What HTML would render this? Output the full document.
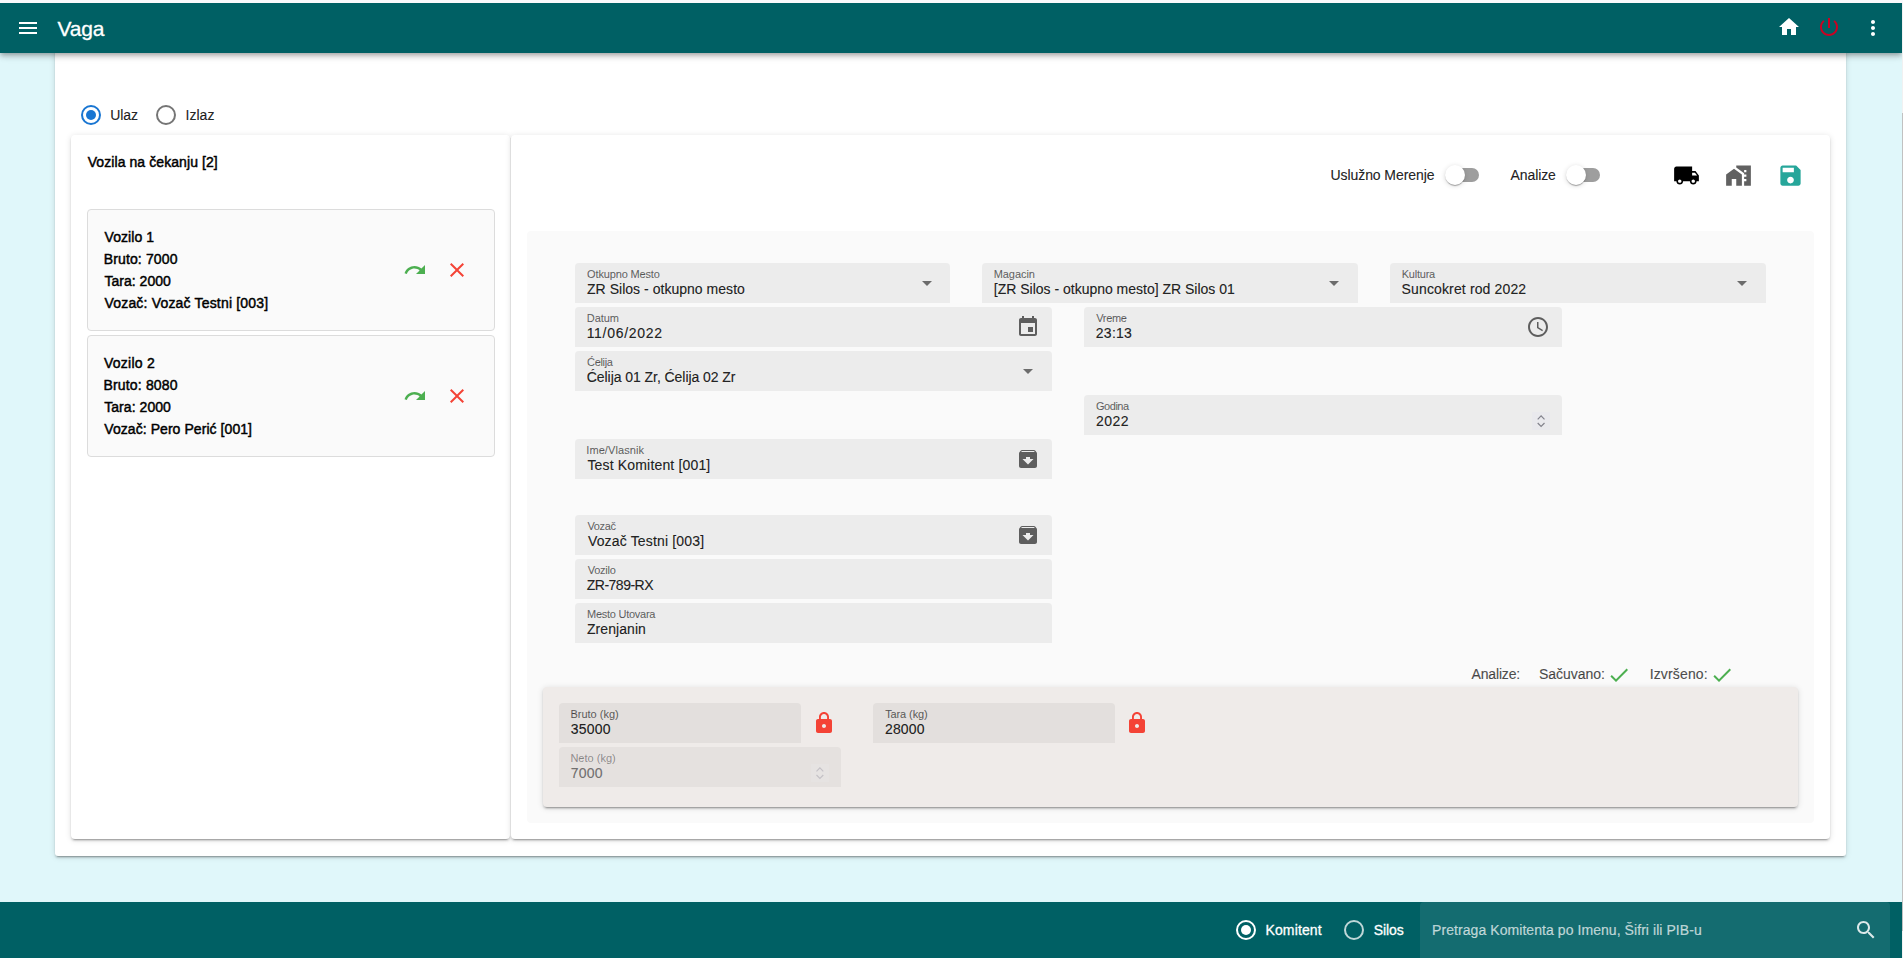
<!DOCTYPE html>
<html lang="sr">
<head>
<meta charset="utf-8">
<title>Vaga</title>
<style>
*{box-sizing:border-box;margin:0;padding:0}
html,body{width:1903px;height:958px;overflow:hidden}
body{position:relative;background:#e0f7fa;font-family:"Liberation Sans",sans-serif;font-size:14px;color:rgba(0,0,0,.87)}
.abs{position:absolute}
.t{position:absolute;white-space:nowrap;line-height:1;z-index:7}
#topstrip{left:0;top:0;width:1903px;height:3px;background:#f9f9fb;z-index:8}
#header{left:0;top:3px;width:1902px;height:50px;background:#006064;box-shadow:0 2px 4px -1px rgba(0,0,0,.2),0 4px 5px 0 rgba(0,0,0,.14),0 1px 10px 0 rgba(0,0,0,.12);z-index:5}
#sb{left:1902px;top:3px;width:1px;height:955px;background:#f1f1f1;z-index:9}
#sbthumb{left:1902px;top:113px;width:1px;height:818px;background:#c1c1c1;z-index:10}
#outer{left:55px;top:40px;width:1791px;height:816px;background:#fff;border-radius:3px;box-shadow:0 3px 1px -2px rgba(0,0,0,.2),0 2px 2px 0 rgba(0,0,0,.14),0 1px 6px 0 rgba(0,0,0,.13)}
.card{background:#fff;border-radius:4px;box-shadow:0 3px 1px -2px rgba(0,0,0,.2),0 2px 2px 0 rgba(0,0,0,.14),0 1px 6px 0 rgba(0,0,0,.13)}
#left{left:71px;top:135px;width:439px;height:704px}
#right{left:511px;top:135px;width:1319px;height:704px}
.vcard{left:87px;width:408px;height:122px;background:#fafafa;border:1px solid #dcdcdc;border-radius:4px}
.b{font-weight:bold;font-size:14px;color:#000}
#panel{left:527px;top:231px;width:1287px;height:592px;background:#fafafa;border-radius:4px}
.f{position:absolute;height:40px;background:#ececec;border-radius:4px 4px 0 0}
.f .l{position:absolute;left:12px;top:6px;font-size:11px;line-height:1;color:rgba(0,0,0,.6);white-space:nowrap}
.f .v{position:absolute;left:12px;top:19px;font-size:14px;line-height:1;color:rgba(0,0,0,.87);white-space:nowrap}
#wpanel{left:543px;top:687px;width:1255px;height:120px;background:#efebe9;border-radius:4px;box-shadow:0 3px 1px -2px rgba(0,0,0,.2),0 2px 2px 0 rgba(0,0,0,.14),0 1px 6px 0 rgba(0,0,0,.13)}
.w{background:#e3dfdd}
#footer{left:0;top:902px;width:1902px;height:56px;background:#006064}
#search{left:1420px;top:902px;width:470px;height:56px;background:#146c70;border-radius:4px 4px 0 0}
svg{position:absolute;display:block}
.arr{position:absolute;width:0;height:0;border-left:5px solid transparent;border-right:5px solid transparent;border-top:5px solid rgba(0,0,0,.54)}
.thumb{width:20px;height:20px;border-radius:50%;background:#fff;box-shadow:0 2px 1px -1px rgba(0,0,0,.2),0 1px 1px 0 rgba(0,0,0,.14),0 1px 5px 0 rgba(0,0,0,.16)}
</style>
</head>
<body>
<div id="topstrip" class="abs"></div>
<div id="outer" class="abs"></div>
<div id="header" class="abs"></div>
<div id="sb" class="abs"></div>
<div id="sbthumb" class="abs"></div>

<!-- header content -->
<div id="hdr-content" style="position:absolute;left:0;top:0;z-index:6">
<svg style="left:15.600px;top:16px" width="24" height="24" viewBox="0 0 24 24"><path fill="#fff" d="M3 18h18v-2H3v2zm0-5h18v-2H3v2zm0-7v2h18V6H3z"/></svg>
<svg style="left:1777px;top:15px" width="24" height="24" viewBox="0 0 24 24"><path fill="#fff" d="M10 20v-6h4v6h5v-8h3L12 3 2 12h3v8z"/></svg>
<svg style="left:1817px;top:15px" width="24" height="24" viewBox="0 0 24 24"><path fill="#cc0022" d="M13 3h-2v10h2V3zm4.83 2.170l-1.420 1.420C17.990 7.860 19 9.810 19 12c0 3.870-3.130 7-7 7s-7-3.130-7-7c0-2.190 1.010-4.140 2.580-5.420L6.170 5.170C4.230 6.820 3 9.260 3 12c0 4.970 4.030 9 9 9s9-4.030 9-9c0-2.740-1.230-5.180-3.170-6.830z"/></svg>
<svg style="left:1861.4px;top:16px" width="24" height="24" viewBox="0 0 24 24"><path fill="#fff" d="M12 8c1.100 0 2-.9 2-2s-.9-2-2-2-2 .9-2 2 .9 2 2 2zm0 2c-1.100 0-2 .9-2 2s.9 2 2 2 2-.9 2-2-.9-2-2-2zm0 6c-1.100 0-2 .9-2 2s.9 2 2 2 2-.9 2-2-.9-2-2-2z"/></svg>
</div>

<!-- radios -->
<div id="radios">
<svg style="left:81px;top:105px" width="20" height="20" viewBox="0 0 20 20"><circle cx="10" cy="10" r="9" fill="none" stroke="#1976d2" stroke-width="2"/><circle cx="10" cy="10" r="5" fill="#1976d2"/></svg>
<svg style="left:156px;top:105px" width="20" height="20" viewBox="0 0 20 20"><circle cx="10" cy="10" r="9" fill="none" stroke="#757575" stroke-width="2"/></svg>
</div>

<!-- left card -->
<div id="left" class="abs card"></div>
<div id="leftc">
<div class="abs vcard" style="top:209px"></div>
<div class="abs vcard" style="top:335px"></div>
</div>

<!-- right card -->
<div id="right" class="abs card"></div>
<div id="seam" class="abs" style="left:510px;top:138px;width:1px;height:698px;background:#dedede"></div>
<div id="panel" class="abs"></div>
<div id="wpanel" class="abs"></div>
<!-- fields -->
<div class="f" style="left:575px;top:263px;width:375px"></div>
<div class="f" style="left:982px;top:263px;width:376px"></div>
<div class="f" style="left:1390px;top:263px;width:376px"></div>
<div class="f" style="left:575px;top:307px;width:477px"></div>
<div class="f" style="left:1084px;top:307px;width:478px"></div>
<div class="f" style="left:575px;top:351px;width:477px"></div>
<div class="f" style="left:1084px;top:395px;width:478px"></div>
<div class="f" style="left:575px;top:439px;width:477px"></div>
<div class="f" style="left:575px;top:515px;width:477px"></div>
<div class="f" style="left:575px;top:559px;width:477px"></div>
<div class="f" style="left:575px;top:603px;width:477px"></div>
<!-- select arrows -->
<div class="arr" style="left:922px;top:281px"></div>
<div class="arr" style="left:1329px;top:281px"></div>
<div class="arr" style="left:1737px;top:281px"></div>
<div class="arr" style="left:1023px;top:369px"></div>
<!-- calendar -->
<svg style="left:1016.2px;top:315px" width="24" height="24" viewBox="0 0 24 24"><path fill="rgba(0,0,0,.6)" d="M17 12h-5v5h5v-5zM16 1v2H8V1H6v2H5c-1.110 0-1.990.9-1.990 2L3 19c0 1.100.89 2 2 2h14c1.100 0 2-.9 2-2V5c0-1.100-.9-2-2-2h-1V1h-2zm3 18H5V8h14v11z"/></svg>
<!-- clock -->
<svg style="left:1526px;top:315px" width="24" height="24" viewBox="0 0 24 24"><path fill="rgba(0,0,0,.6)" d="M11.990 2C6.470 2 2 6.480 2 12s4.470 10 9.990 10C17.520 22 22 17.520 22 12S17.520 2 11.990 2zM12 20c-4.420 0-8-3.580-8-8s3.580-8 8-8 8 3.580 8 8-3.580 8-8 8zm.5-13H11v6l5.250 3.150.75-1.230-4.500-2.670z"/></svg>
<!-- spinner godina -->
<div class="abs" style="left:1532px;top:412px;width:18px;height:18px;background:#e9e9ed"></div>
<svg style="left:1536px;top:412px" width="10" height="18" viewBox="0 0 10 18"><path fill="none" stroke="#82828c" stroke-width="1.200" d="M1.700 7.300 L5.100 3.900 L8.500 7.300 M1.700 11 L5.100 14.400 L8.500 11"/></svg>
<!-- archive icons -->
<svg style="left:1016.2px;top:447px" width="24" height="24" viewBox="0 0 24 24"><path fill="rgba(0,0,0,.6)" d="M20.540 5.230l-1.390-1.680C18.880 3.210 18.470 3 18 3H6c-.47 0-.88.21-1.160.55L3.460 5.230C3.170 5.570 3 6.020 3 6.500V19c0 1.100.9 2 2 2h14c1.100 0 2-.9 2-2V6.500c0-.48-.17-.93-.46-1.270zM12 17.500L6.500 12H10v-2h4v2h3.500L12 17.500zM5.120 5l.81-1h12l.94 1H5.120z"/></svg>
<svg style="left:1016.2px;top:523px" width="24" height="24" viewBox="0 0 24 24"><path fill="rgba(0,0,0,.6)" d="M20.540 5.230l-1.390-1.680C18.880 3.210 18.470 3 18 3H6c-.47 0-.88.21-1.160.55L3.460 5.230C3.170 5.570 3 6.020 3 6.500V19c0 1.100.9 2 2 2h14c1.100 0 2-.9 2-2V6.500c0-.48-.17-.93-.46-1.270zM12 17.500L6.500 12H10v-2h4v2h3.500L12 17.500zM5.120 5l.81-1h12l.94 1H5.120z"/></svg>
<!-- checks -->
<svg style="left:1607px;top:663px" width="24" height="24" viewBox="0 0 24 24"><path fill="#4caf50" d="M9 16.170L4.830 12l-1.420 1.410L9 19 21 7l-1.410-1.410z"/></svg>
<svg style="left:1710px;top:663px" width="24" height="24" viewBox="0 0 24 24"><path fill="#4caf50" d="M9 16.170L4.830 12l-1.420 1.410L9 19 21 7l-1.410-1.410z"/></svg>

<!-- weight fields -->
<div class="f w" style="left:559px;top:703px;width:242px"></div>
<div class="f w" style="left:873px;top:703px;width:242px"></div>
<div class="f w" style="left:559px;top:747px;width:282px;background:#e5e1df"></div>
<svg style="left:812px;top:711px" width="24" height="24" viewBox="0 0 24 24"><path fill="#f44336" d="M18 8h-1V6c0-2.760-2.240-5-5-5S7 3.240 7 6v2H6c-1.100 0-2 .9-2 2v10c0 1.100.9 2 2 2h12c1.100 0 2-.9 2-2V10c0-1.100-.9-2-2-2zm-6 9c-1.100 0-2-.9-2-2s.9-2 2-2 2 .9 2 2-.9 2-2 2zm3.100-9H8.900V6c0-1.710 1.390-3.100 3.100-3.100 1.710 0 3.100 1.390 3.100 3.100v2z"/></svg>
<svg style="left:1125.4px;top:711px" width="24" height="24" viewBox="0 0 24 24"><path fill="#f44336" d="M18 8h-1V6c0-2.760-2.240-5-5-5S7 3.240 7 6v2H6c-1.100 0-2 .9-2 2v10c0 1.100.9 2 2 2h12c1.100 0 2-.9 2-2V10c0-1.100-.9-2-2-2zm-6 9c-1.100 0-2-.9-2-2s.9-2 2-2 2 .9 2 2-.9 2-2 2zm3.100-9H8.900V6c0-1.710 1.390-3.100 3.100-3.100 1.710 0 3.100 1.390 3.100 3.100v2z"/></svg>
<div class="abs" style="left:811px;top:764px;width:18px;height:18px;background:#e6e3e2"></div>
<svg style="left:815px;top:764px" width="10" height="18" viewBox="0 0 10 18"><path fill="none" stroke="#c4c1c6" stroke-width="1.200" d="M1.500 7.300 L4.900 3.900 L8.300 7.300 M1.500 11 L4.900 14.400 L8.300 11"/></svg>

<!-- toggles -->
<div class="abs" style="left:1447px;top:168px;width:32px;height:14px;border-radius:7px;background:#9e9e9e"></div>
<div class="abs thumb" style="left:1445px;top:165px"></div>
<div class="abs" style="left:1568px;top:168px;width:32px;height:14px;border-radius:7px;background:#9e9e9e"></div>
<div class="abs thumb" style="left:1566px;top:165px"></div>
<!-- truck -->
<svg style="left:1673.4px;top:162px" width="27" height="27" viewBox="0 0 24 24"><path fill="#000" d="M20 8h-3V4H3c-1.100 0-2 .9-2 2v11h2c0 1.660 1.340 3 3 3s3-1.340 3-3h6c0 1.660 1.340 3 3 3s3-1.340 3-3h2v-5l-3-4zM6 18.500c-.83 0-1.500-.67-1.500-1.500s.67-1.500 1.500-1.500 1.500.67 1.500 1.500-.67 1.500-1.500 1.500zm13.500-9l1.960 2.500H17V9.500h2.500zm-1.500 9c-.83 0-1.500-.67-1.500-1.500s.67-1.500 1.500-1.500 1.500.67 1.500 1.500-.67 1.500-1.500 1.500z"/></svg>
<!-- home_work -->
<svg style="left:1724.9px;top:162px" width="27" height="27" viewBox="0 0 24 24"><path fill="#616161" d="M1 11v10h5v-6h4v6h5V11L8 6z"/><path fill="#616161" d="M10 3v1.970l7 5V11h2v2h-2v2h2v2h-2v4h6V3H10zm9 6h-2V7h2v2z"/></svg>
<!-- save -->
<svg style="left:1776.5px;top:162px" width="27" height="27" viewBox="0 0 24 24"><path fill="#26a69a" d="M17 3H5c-1.110 0-2 .9-2 2v14c0 1.100.89 2 2 2h14c1.100 0 2-.9 2-2V7l-4-4zm-5 16c-1.660 0-3-1.340-3-3s1.340-3 3-3 3 1.340 3 3-1.340 3-3 3zm3-10H5V5h10v4z"/></svg>

<!-- vehicle icons -->
<svg style="left:403px;top:258px" width="24" height="24" viewBox="0 0 24 24"><path fill="#4caf50" d="M18.400 10.600C16.550 8.990 14.150 8 11.500 8c-4.650 0-8.580 3.030-9.960 7.220L3.900 16c1.050-3.190 4.050-5.500 7.600-5.500 1.950 0 3.730.72 5.120 1.880L13 16h9V7l-3.600 3.600z"/></svg>
<svg style="left:445px;top:258px" width="24" height="24" viewBox="0 0 24 24"><path fill="#f44336" d="M19 6.410L17.590 5 12 10.590 6.410 5 5 6.410 10.590 12 5 17.590 6.410 19 12 13.410 17.590 19 19 17.590 13.410 12z"/></svg>
<svg style="left:403px;top:384px" width="24" height="24" viewBox="0 0 24 24"><path fill="#4caf50" d="M18.400 10.600C16.550 8.990 14.150 8 11.500 8c-4.650 0-8.580 3.030-9.960 7.220L3.900 16c1.050-3.190 4.050-5.500 7.600-5.500 1.950 0 3.730.72 5.120 1.880L13 16h9V7l-3.600 3.600z"/></svg>
<svg style="left:445px;top:384px" width="24" height="24" viewBox="0 0 24 24"><path fill="#f44336" d="M19 6.410L17.590 5 12 10.590 6.410 5 5 6.410 10.590 12 5 17.590 6.410 19 12 13.410 17.590 19 19 17.590 13.410 12z"/></svg>


<!-- footer -->
<div id="footer" class="abs"></div>
<div id="search" class="abs"></div>
<svg style="left:1236px;top:920px" width="20" height="20" viewBox="0 0 20 20"><circle cx="10" cy="10" r="9" fill="none" stroke="#fff" stroke-width="2"/><circle cx="10" cy="10" r="5" fill="#fff"/></svg>
<svg style="left:1344px;top:920px" width="20" height="20" viewBox="0 0 20 20"><circle cx="10" cy="10" r="9" fill="none" stroke="rgba(255,255,255,.75)" stroke-width="2"/></svg>
<svg style="left:1854px;top:918px" width="24" height="24" viewBox="0 0 24 24"><path fill="rgba(255,255,255,.85)" d="M15.500 14h-.79l-.28-.27C15.410 12.590 16 11.110 16 9.500 16 5.910 13.090 3 9.500 3S3 5.910 3 9.500 5.910 16 9.500 16c1.610 0 3.090-.59 4.230-1.570l.27.28v.79l5 4.990L20.490 19l-4.990-5zm-6 0C7.010 14 5 11.990 5 9.500S7.010 5 9.500 5 14 7.010 14 9.500 11.990 14 9.500 14z"/></svg>

<div class="t" style="left:57.52px;top:18px;font-size:21px;color:#fff;letter-spacing:-0.163px;-webkit-text-stroke:.3px #fff">Vaga</div>
<div class="t" style="left:110.26px;top:108px;font-size:14px;color:rgba(0,0,0,.87);letter-spacing:-0.075px;-webkit-text-stroke:.18px rgba(0,0,0,.87)">Ulaz</div>
<div class="t" style="left:185.46px;top:108px;font-size:14px;color:rgba(0,0,0,.87);letter-spacing:0.047px;-webkit-text-stroke:.18px rgba(0,0,0,.87)">Izlaz</div>
<div class="t" style="left:87.73px;top:155px;font-size:14px;color:#000;letter-spacing:0.077px;-webkit-text-stroke:.45px #000">Vozila na čekanju [2]</div>
<div class="t" style="left:104.50px;top:230px;font-size:14px;color:#000;letter-spacing:0.073px;-webkit-text-stroke:.45px #000">Vozilo 1</div>
<div class="t" style="left:103.69px;top:252px;font-size:14px;color:#000;letter-spacing:0.137px;-webkit-text-stroke:.45px #000">Bruto: 7000</div>
<div class="t" style="left:104.38px;top:274px;font-size:14px;color:#000;letter-spacing:0.031px;-webkit-text-stroke:.45px #000">Tara: 2000</div>
<div class="t" style="left:104.50px;top:296px;font-size:14px;color:#000;letter-spacing:0.179px;-webkit-text-stroke:.45px #000">Vozač: Vozač Testni [003]</div>
<div class="t" style="left:103.90px;top:356px;font-size:14px;color:#000;letter-spacing:0.280px;-webkit-text-stroke:.45px #000">Vozilo 2</div>
<div class="t" style="left:103.49px;top:378px;font-size:14px;color:#000;letter-spacing:0.166px;-webkit-text-stroke:.45px #000">Bruto: 8080</div>
<div class="t" style="left:104.18px;top:400px;font-size:14px;color:#000;letter-spacing:0.060px;-webkit-text-stroke:.45px #000">Tara: 2000</div>
<div class="t" style="left:104.30px;top:422px;font-size:14px;color:#000;letter-spacing:0.062px;-webkit-text-stroke:.45px #000">Vozač: Pero Perić [001]</div>
<div class="t" style="left:1330.53px;top:168px;font-size:14px;color:rgba(0,0,0,.87);letter-spacing:-0.079px;-webkit-text-stroke:.18px rgba(0,0,0,.87)">Uslužno Merenje</div>
<div class="t" style="left:1510.51px;top:168px;font-size:14px;color:rgba(0,0,0,.87);letter-spacing:-0.086px;-webkit-text-stroke:.18px rgba(0,0,0,.87)">Analize</div>
<div class="t" style="left:587.12px;top:269px;font-size:11px;color:rgba(0,0,0,.6);letter-spacing:-0.151px;-webkit-text-stroke:.1px rgba(0,0,0,.6)">Otkupno Mesto</div>
<div class="t" style="left:587.00px;top:282px;font-size:14px;color:rgba(0,0,0,.87);letter-spacing:0.029px;-webkit-text-stroke:.18px rgba(0,0,0,.87)">ZR Silos - otkupno mesto</div>
<div class="t" style="left:993.64px;top:269px;font-size:11px;color:rgba(0,0,0,.6);letter-spacing:-0.040px;-webkit-text-stroke:.1px rgba(0,0,0,.6)">Magacin</div>
<div class="t" style="left:993.86px;top:282px;font-size:14px;color:rgba(0,0,0,.87);letter-spacing:-0.009px;-webkit-text-stroke:.18px rgba(0,0,0,.87)">[ZR Silos - otkupno mesto] ZR Silos 01</div>
<div class="t" style="left:1401.64px;top:269px;font-size:11px;color:rgba(0,0,0,.6);letter-spacing:-0.207px;-webkit-text-stroke:.1px rgba(0,0,0,.6)">Kultura</div>
<div class="t" style="left:1401.61px;top:282px;font-size:14px;color:rgba(0,0,0,.87);letter-spacing:0.136px;-webkit-text-stroke:.18px rgba(0,0,0,.87)">Suncokret rod 2022</div>
<div class="t" style="left:586.84px;top:313px;font-size:11px;color:rgba(0,0,0,.6);letter-spacing:-0.104px;-webkit-text-stroke:.1px rgba(0,0,0,.6)">Datum</div>
<div class="t" style="left:586.65px;top:326px;font-size:14px;color:rgba(0,0,0,.87);letter-spacing:0.720px;-webkit-text-stroke:.18px rgba(0,0,0,.87)">11/06/2022</div>
<div class="t" style="left:1096.25px;top:313px;font-size:11px;color:rgba(0,0,0,.6);letter-spacing:-0.321px;-webkit-text-stroke:.1px rgba(0,0,0,.6)">Vreme</div>
<div class="t" style="left:1095.80px;top:326px;font-size:14px;color:rgba(0,0,0,.87);letter-spacing:0.260px;-webkit-text-stroke:.18px rgba(0,0,0,.87)">23:13</div>
<div class="t" style="left:587.08px;top:357px;font-size:11px;color:rgba(0,0,0,.6);letter-spacing:-0.336px;-webkit-text-stroke:.1px rgba(0,0,0,.6)">Ćelija</div>
<div class="t" style="left:586.78px;top:370px;font-size:14px;color:rgba(0,0,0,.87);letter-spacing:-0.057px;-webkit-text-stroke:.18px rgba(0,0,0,.87)">Ćelija 01 Zr, Ćelija 02 Zr</div>
<div class="t" style="left:1096.05px;top:401px;font-size:11px;color:rgba(0,0,0,.6);letter-spacing:-0.487px;-webkit-text-stroke:.1px rgba(0,0,0,.6)">Godina</div>
<div class="t" style="left:1096.00px;top:414px;font-size:14px;color:rgba(0,0,0,.87);letter-spacing:0.439px;-webkit-text-stroke:.18px rgba(0,0,0,.87)">2022</div>
<div class="t" style="left:586.25px;top:445px;font-size:11px;color:rgba(0,0,0,.6);letter-spacing:0.086px;-webkit-text-stroke:.1px rgba(0,0,0,.6)">Ime/Vlasnik</div>
<div class="t" style="left:587.45px;top:458px;font-size:14px;color:rgba(0,0,0,.87);letter-spacing:0.164px;-webkit-text-stroke:.18px rgba(0,0,0,.87)">Test Komitent [001]</div>
<div class="t" style="left:587.47px;top:521px;font-size:11px;color:rgba(0,0,0,.6);letter-spacing:-0.376px;-webkit-text-stroke:.1px rgba(0,0,0,.6)">Vozač</div>
<div class="t" style="left:587.91px;top:534px;font-size:14px;color:rgba(0,0,0,.87);letter-spacing:0.167px;-webkit-text-stroke:.18px rgba(0,0,0,.87)">Vozač Testni [003]</div>
<div class="t" style="left:587.67px;top:565px;font-size:11px;color:rgba(0,0,0,.6);letter-spacing:-0.234px;-webkit-text-stroke:.1px rgba(0,0,0,.6)">Vozilo</div>
<div class="t" style="left:586.80px;top:578px;font-size:14px;color:rgba(0,0,0,.87);letter-spacing:-0.509px;-webkit-text-stroke:.18px rgba(0,0,0,.87)">ZR-789-RX</div>
<div class="t" style="left:587.04px;top:609px;font-size:11px;color:rgba(0,0,0,.6);letter-spacing:-0.260px;-webkit-text-stroke:.1px rgba(0,0,0,.6)">Mesto Utovara</div>
<div class="t" style="left:587.00px;top:622px;font-size:14px;color:rgba(0,0,0,.87);letter-spacing:0.063px;-webkit-text-stroke:.18px rgba(0,0,0,.87)">Zrenjanin</div>
<div class="t" style="left:1471.58px;top:667px;font-size:14px;color:rgba(0,0,0,.7);letter-spacing:-0.175px;-webkit-text-stroke:.18px rgba(0,0,0,.7)">Analize:</div>
<div class="t" style="left:1539.01px;top:667px;font-size:14px;color:rgba(0,0,0,.7);letter-spacing:-0.038px;-webkit-text-stroke:.18px rgba(0,0,0,.7)">Sačuvano:</div>
<div class="t" style="left:1649.64px;top:667px;font-size:14px;color:rgba(0,0,0,.7);letter-spacing:0.153px;-webkit-text-stroke:.18px rgba(0,0,0,.7)">Izvršeno:</div>
<div class="t" style="left:570.42px;top:709px;font-size:11px;color:rgba(0,0,0,.6);letter-spacing:0.002px;-webkit-text-stroke:.1px rgba(0,0,0,.6)">Bruto (kg)</div>
<div class="t" style="left:570.86px;top:722px;font-size:14px;color:rgba(0,0,0,.87);letter-spacing:0.186px;-webkit-text-stroke:.18px rgba(0,0,0,.87)">35000</div>
<div class="t" style="left:885.14px;top:709px;font-size:11px;color:rgba(0,0,0,.6);letter-spacing:-0.094px;-webkit-text-stroke:.1px rgba(0,0,0,.6)">Tara (kg)</div>
<div class="t" style="left:884.99px;top:722px;font-size:14px;color:rgba(0,0,0,.87);letter-spacing:0.150px;-webkit-text-stroke:.18px rgba(0,0,0,.87)">28000</div>
<div class="t" style="left:570.42px;top:753px;font-size:11px;color:rgba(0,0,0,.38);letter-spacing:0.003px;-webkit-text-stroke:.1px rgba(0,0,0,.38)">Neto (kg)</div>
<div class="t" style="left:570.79px;top:766px;font-size:14px;color:rgba(0,0,0,.5);letter-spacing:0.197px;-webkit-text-stroke:.18px rgba(0,0,0,.5)">7000</div>
<div class="t" style="left:1265.49px;top:923px;font-size:14px;color:#fff;letter-spacing:0.124px;-webkit-text-stroke:.3px #fff">Komitent</div>
<div class="t" style="left:1373.65px;top:923px;font-size:14px;color:#fff;letter-spacing:-0.035px;-webkit-text-stroke:.3px #fff">Silos</div>
<div class="t" style="left:1432.09px;top:923px;font-size:14px;color:rgba(255,255,255,.7);letter-spacing:0.064px;-webkit-text-stroke:.18px rgba(255,255,255,.7)">Pretraga Komitenta po Imenu, Šifri ili PIB-u</div>
</body>
</html>
